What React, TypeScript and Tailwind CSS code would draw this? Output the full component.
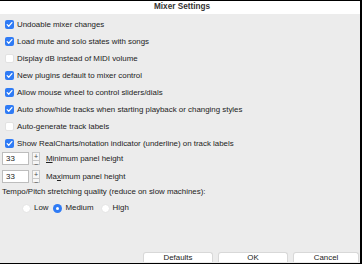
import React from "react";

// Options shown as checkboxes, in order
const OPTIONS: { label: string; checked: boolean }[] = [
  { label: "Undoable mixer changes", checked: true },
  { label: "Load mute and solo states with songs", checked: true },
  { label: "Display dB instead of MIDI volume", checked: false },
  { label: "New plugins default to mixer control", checked: true },
  { label: "Allow mouse wheel to control sliders/dials", checked: true },
  { label: "Auto show/hide tracks when starting playback or changing styles", checked: true },
  { label: "Auto-generate track labels", checked: false },
  { label: "Show RealCharts/notation indicator (underline) on track labels", checked: true },
];

function CheckBox({ checked }: { checked: boolean }) {
  if (!checked) {
    return <div className="w-[9px] h-[9px] rounded-[2px] bg-white border border-[#e2e2e2] shrink-0" />;
  }
  return (
    <div className="w-[9px] h-[9px] rounded-[2px] bg-[#2f7bf5] shrink-0 flex items-center justify-center">
      <svg width="7" height="7" viewBox="0 0 7 7">
        <path d="M1.2 3.6 L2.8 5.2 L5.9 1.6" fill="none" stroke="white" strokeWidth="1.3" strokeLinecap="round" strokeLinejoin="round" />
      </svg>
    </div>
  );
}

function Radio({ checked }: { checked: boolean }) {
  if (!checked) {
    return <div className="w-[9px] h-[9px] rounded-full bg-white border border-[#e4e4e4] shrink-0" />;
  }
  return (
    <div className="w-[9px] h-[9px] rounded-full bg-[#2f7bf5] shrink-0 flex items-center justify-center">
      <div className="w-[3px] h-[3px] rounded-full bg-white" />
    </div>
  );
}

function SpinRow({ label }: { label: React.ReactNode }) {
  return (
    <div className="h-[13px] flex items-center">
      <div className="ml-[2px] w-[27px] h-[13px] bg-white border border-[#bdbdbd] pl-[3px] flex items-center">
        33
      </div>
      <div className="ml-[3px] w-[8px] h-[13px] flex flex-col border border-[#c8c8c8] bg-[#f6f6f6] text-[7px] leading-none text-[#444]">
        <div className="flex-1 flex items-center justify-center border-b border-[#c8c8c8]">+</div>
        <div className="flex-1 flex items-center justify-center">−</div>
      </div>
      <span className="ml-[6px]">{label}</span>
    </div>
  );
}

export default function App() {
  return (
    <div
      className="w-[362px] h-[264px] flex flex-col border-t border-b border-r-2 border-black bg-[#ececec] text-[#222] text-[7.9px] leading-none overflow-hidden"
      style={{ fontFamily: '"Liberation Sans", Arial, sans-serif' }}
    >
      {/* Title bar */}
      <div className="h-[13px] bg-white flex items-center justify-center font-bold text-[8.2px] text-[#333] pl-[4px]">
        Mixer Settings
      </div>

      {/* Body */}
      <div className="flex-1 flex flex-col pt-[2px]">
        {OPTIONS.map((o) => (
          <div key={o.label} className="h-[17px] flex items-center pl-[5px] gap-[3px]">
            <CheckBox checked={o.checked} />
            <span>{o.label}</span>
          </div>
        ))}

        <SpinRow
          label={
            <>
              <span className="underline">M</span>inimum panel height
            </>
          }
        />
        <div className="mt-[5px]">
          <SpinRow
            label={
              <>
                Ma<span className="underline">x</span>imum panel height
              </>
            }
          />
        </div>

        <div className="mt-[4px] pl-[2px] h-[10px] flex items-center">
          Tempo/Pitch stretching quality (reduce on slow machines):
        </div>

        <div className="mt-[6px] h-[10px] flex items-center pl-[22px]">
          <Radio checked={false} />
          <span className="ml-[3px]">Low</span>
          <div className="ml-[5px]">
            <Radio checked={true} />
          </div>
          <span className="ml-[3px]">Medium</span>
          <div className="ml-[7px]">
            <Radio checked={false} />
          </div>
          <span className="ml-[3px]">High</span>
        </div>

        {/* Buttons */}
        <div className="mt-auto flex justify-end gap-[5px] pr-[1px] pb-[1px]">
          <div className="w-[70px] h-[10px] bg-white border border-b-0 border-[#d8d8d8] rounded-t-[3px] flex items-center justify-center">
            Defaults
          </div>
          <div className="w-[70px] h-[10px] bg-white border border-b-0 border-[#d8d8d8] rounded-t-[3px] flex items-center justify-center">
            OK
          </div>
          <div className="w-[66px] h-[10px] bg-white border border-b-0 border-[#d8d8d8] rounded-t-[3px] flex items-center justify-center">
            Cancel
          </div>
        </div>
      </div>
    </div>
  );
}
